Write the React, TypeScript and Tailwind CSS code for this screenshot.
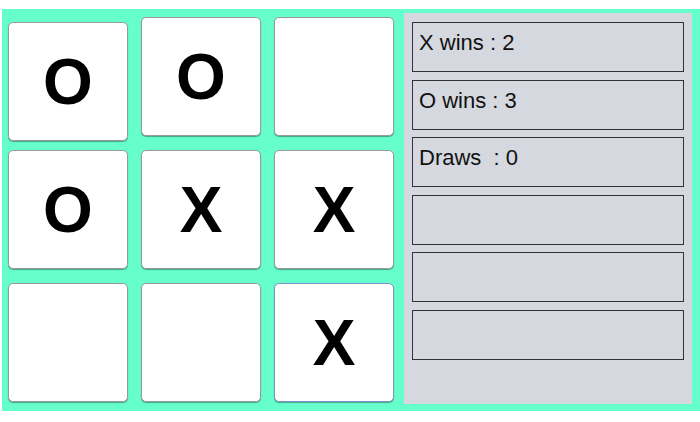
const board: string[][] = [
  ["O", "O", ""],
  ["O", "X", "X"],
  ["", "", "X"],
];

const stats = ["X wins : 2", "O wins : 3", "Draws  : 0", "", "", ""];

const App = () => {
  return (
    <div className="h-[422px] w-[700px] bg-white pl-[2px] pt-[9px] font-['Liberation_Sans',Arial,sans-serif]">
      <div className="flex h-[402px] w-[698px] bg-[#66ffcc]">
        {/* Board */}
        <div className="flex flex-col gap-[14px] pl-[6px] pt-[8px]">
          {board.map((row, r) => (
            <div key={r} className="flex items-start gap-[13px]">
              {row.map((cell, c) => {
                const focused = r === 2 && c === 2;
                const shifted = r === 0 && c === 0;
                return (
                  <div
                    key={c}
                    className={
                      "flex h-[119px] w-[120px] items-center justify-center rounded-[5px] border bg-white text-[64px] font-bold leading-none text-black shadow-[0_1px_1px_rgba(0,0,0,0.35)] " +
                      (focused ? "border-[#7d8fcc] " : "border-[#9a9a9a] ") +
                      (shifted ? "-mb-[5px] mt-[5px]" : "")
                    }
                  >
                    {cell}
                  </div>
                );
              })}
            </div>
          ))}
        </div>

        {/* Score panel */}
        <div className="ml-[10px] mt-[4px] flex h-[391px] w-[288px] flex-col gap-[7.5px] bg-[#d5d8df] px-[8px] pt-[9px]">
          {stats.map((s, i) => (
            <div
              key={i}
              className="h-[50px] whitespace-pre border border-[#333] pl-[6px] pt-[7px] text-[22px] leading-[25px] text-[#111]"
            >
              {s}
            </div>
          ))}
        </div>
      </div>
    </div>
  );
};

export default App;
